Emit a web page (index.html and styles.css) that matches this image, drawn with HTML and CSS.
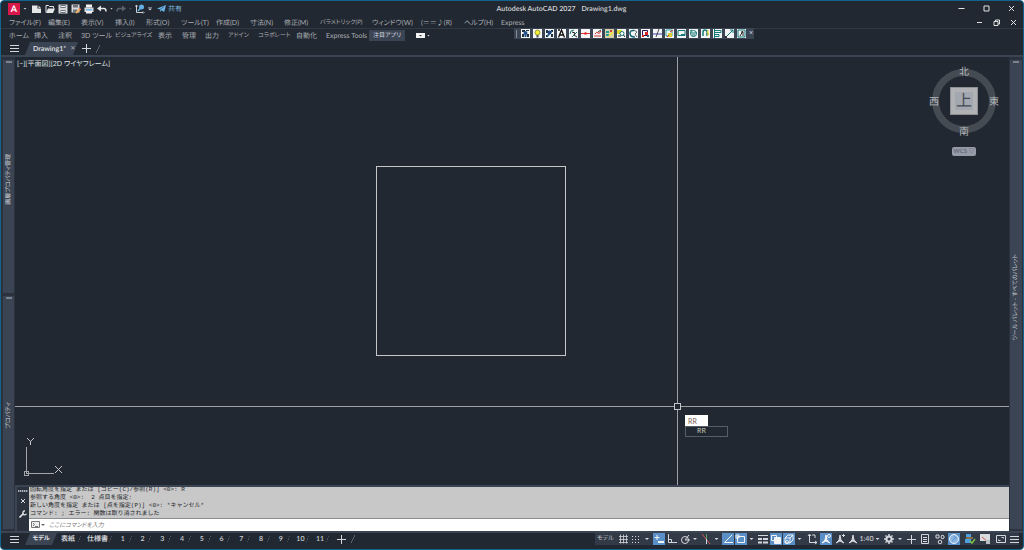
FILE: index.html
```html
<!DOCTYPE html>
<html lang="ja">
<head>
<meta charset="utf-8">
<title>Autodesk AutoCAD 2027 - Drawing1.dwg</title>
<link rel="stylesheet" href="styles.css">
</head>
<body>
<div class="window">
  <header class="titlebar">
    <div class="quick">
      <button class="app" aria-label="アプリケーション メニュー"><b>A</b></button>
      <span class="caret"></span>
      <button class="qi" aria-label="新規"><svg viewBox="0 0 10 10"><path fill="#e4e6e8" d="M0 1.500h5.500v3H9V9H0z"/><path fill="#c5c8cc" d="M6.500 1.500L9 4H6.500z"/></svg></button>
      <button class="qi" aria-label="開く"><svg viewBox="0 0 10 10"><path fill="none" stroke="#e4e6e8" d="M1 8.500v-7h2.500l1 1h4v2"/><path fill="#e4e6e8" d="M3 4.500h7L8 9H1z"/></svg></button>
      <button class="qi" aria-label="上書き保存"><svg viewBox="0 0 10 10"><path fill="#d6d8da" d="M.5.5h9v9h-9z"/><path fill="#6b727b" d="M2.500 1h5v3h-5zM2.500 6h5v3h-5z"/><path fill="#eee" d="M3 2h4v1H3zM3 7h4v1H3z"/></svg></button>
      <button class="qi" aria-label="名前を付けて保存"><svg viewBox="0 0 10 10"><path fill="#d6d8da" d="M.5.5h8v8h-8z"/><path fill="#6b727b" d="M2 1h5v2.500H2zM2 5.500h4v3H2z"/><path stroke="#e8b060" stroke-width="2" d="M5 9l4-4"/><path stroke="#e36b5c" stroke-width="2" d="M8.500 5.500l1-1"/></svg></button>
      <button class="qi" aria-label="印刷"><svg viewBox="0 0 10 10"><path fill="#f2f2f2" d="M2 .5h6v3H2z"/><path fill="#d6d8da" d="M.5 3.500h9V8h-9z"/><path fill="#72b7e8" d="M2 5h6v1.500H2z"/><path fill="#f2f2f2" d="M2 7h6v2.500H2z"/></svg></button>
      <button class="qi" aria-label="元に戻す"><svg viewBox="0 0 10 10"><path fill="none" stroke="#e4e6e8" stroke-width="1.500" d="M3 4.500h4q2 0 2 3"/><path fill="#e4e6e8" d="M0 4.500l4-3v6z"/></svg></button>
      <span class="caret small"></span>
      <button class="qi" aria-label="やり直し"><svg viewBox="0 0 10 10"><path fill="none" stroke="#59616c" stroke-width="1.500" d="M7 4.500H3q-2 0-2 3"/><path fill="#59616c" d="M10 4.500l-4-3v6z"/></svg></button>
      <span class="caret small dim"></span>
      <button class="qi" aria-label="フィールド"><svg viewBox="0 0 10 10"><path fill="none" stroke="#ccd1d6" d="M1.500 1v7.500H8M.5 2.500l1-1.500 1 1.500M8 7.500l1 1-1 1"/><circle cx="6.500" cy="3" r="2.500" fill="#65afe4"/><path stroke="#65afe4" stroke-width="1.500" d="M3 7l2.500-3"/></svg></button>
      <span class="custom caret"></span>
      <button class="share"><svg viewBox="0 0 10 10"><path fill="#6bb6ea" d="M0 5l10-4-2 8-3-2-1.500 2V6z"/><path stroke="#232932" stroke-width=".6" d="M3.500 6L8 2.700"/></svg>共有</button>
    </div>
    <h1 class="title"><span>Autodesk AutoCAD 2027</span><span>Drawing1.dwg</span></h1>
    <div class="winctl">
      <button aria-label="最小化"><svg viewBox="0 0 7 7"><path d="M.5 3.500h6"/></svg></button>
      <button aria-label="最大化"><svg viewBox="0 0 7 7"><path d="M1 1h5v5H1z"/></svg></button>
      <button aria-label="閉じる"><svg viewBox="0 0 7 7"><path d="M1 1l5 5M6 1L1 6"/></svg></button>
    </div>
  </header>

  <nav class="menubar">
    <div class="menus">
      <button>ファイル(F)</button><button>編集(E)</button><button>表示(V)</button><button>挿入(I)</button><button>形式(O)</button><button>ツール(T)</button><button>作成(D)</button><button>寸法(N)</button><button>修正(M)</button><button class="kana">パラメトリック(P)</button><button>ウィンドウ(W)</button><button>(＝＝♪(R)</button><button>ヘルプ(H)</button><button>Express</button>
    </div>
    <div class="docctl">
      <button aria-label="図面を最小化"><svg viewBox="0 0 7 7"><path d="M1 3.500h5"/></svg></button>
      <button aria-label="図面を元に戻す"><svg viewBox="0 0 7 7"><path d="M1 2.500h4v4H1zM2.500 2.500V1h4v4H5"/></svg></button>
      <button aria-label="図面を閉じる"><svg viewBox="0 0 7 7"><path d="M1 1l5 5M6 1L1 6"/></svg></button>
    </div>
  </nav>

  <nav class="ribbon">
    <button>ホーム</button><button>挿入</button><button>注釈</button><button>3D ツール</button><button class="kana">ビジュアライズ</button><button>表示</button><button>管理</button><button>出力</button><button class="kana">アドイン</button><button class="kana">コラボレート</button><button>自動化</button><button>Express Tools</button><button class="active">注目アプリ</button>
    <button class="panelbtn" aria-label="リボン表示"><svg viewBox="0 0 9 5"><path fill="#f2f2f2" d="M0 0h9v5H0z"/><path fill="#333" d="M3 2h3L4.500 3.500z"/></svg><span class="caret small"></span></button>
    <div class="express">
      <span class="grip"></span>
      <button aria-label="レイヤ"><svg viewBox="0 0 9 9"><path fill="#1f3242" d="M1 1h3v2H1zM5 1h3v1H5zM1 5h2v3H1zM6 5h2v3H6z"/><circle cx="4.500" cy="4" r="2" fill="#24508c"/><path fill="#24508c" d="M3.500 5h2v3h-2z"/></svg></button>
      <button aria-label="レイヤ表示"><svg viewBox="0 0 9 9"><circle cx="4.500" cy="3.500" r="2.500" fill="#f5ed2f" stroke="#777820" stroke-width=".7"/><path fill="#555" d="M3.500 6h2v2.500h-2z"/></svg></button>
      <button aria-label="レイヤ分離"><svg viewBox="0 0 9 9"><path fill="#1f3242" d="M1 1h2v3H1zM6 1h2v2H6zM1 6h2v2H1zM6 5h2v3H6z"/><path stroke="#28669a" stroke-width="2" d="M2.500 7l4-5"/><circle cx="4.500" cy="3.500" r="2" fill="#24447a"/></svg></button>
      <button aria-label="文字"><svg viewBox="0 0 9 9"><path fill="none" stroke="#111" stroke-width="1.300" d="M1.500 8.500L4.500 1l3 7.500M2.500 6h4M1 1h2"/></svg></button>
      <button aria-label="円弧文字"><svg viewBox="0 0 9 9"><path fill="none" stroke="#177" d="M1 5q0-4 4-4M3 8l5-5"/><path fill="none" stroke="#222" d="M3 3l3 1-1 2 3 2"/></svg></button>
      <button aria-label="線分"><svg viewBox="0 0 9 9"><path stroke="#d33" d="M0 4.500h9"/><circle cx="4.500" cy="4.500" r="1.300" fill="#d22"/></svg></button>
      <button aria-label="引出線"><svg viewBox="0 0 9 9"><path fill="none" stroke="#c33" d="M1 7h7M2 5q2-3 3-1t3-2"/><path stroke="#333" d="M5 3l3-2"/></svg></button>
      <button aria-label="ブロック"><svg viewBox="0 0 9 9"><path fill="#d8d0a8" d="M0 0h9v9H0z"/><path fill="#299" d="M1 2h3v2H1zM1 5h3v2H1z"/><path fill="#c43" d="M5 1h2v2H5z"/><path stroke="#f4e82a" stroke-width="1.500" d="M4 7l4-4"/></svg></button>
      <button aria-label="検索"><svg viewBox="0 0 9 9"><path fill="#d9d92b" d="M0 1h5v4H0z"/><circle cx="5" cy="4.500" r="2" fill="#fff" stroke="#177"/><path stroke="#222" d="M6.500 6L8 8M1 7h3"/></svg></button>
      <button aria-label="雲マーク"><svg viewBox="0 0 9 9"><path fill="none" stroke="#167" stroke-width="1.500" d="M5 1.500Q1 1 1 4.500T6 8"/><path fill="none" stroke="#344" stroke-width=".8" d="M5 1l3 2-2 2 2 3"/></svg></button>
      <button aria-label="置換"><svg viewBox="0 0 9 9"><path fill="none" stroke="#315" d="M1.500 1.500h5v5h-5z"/><path fill="#d22" d="M4 3h3v3H4zM1 6h2v2H1z"/><path fill="#258" d="M6 6h2v2H6z"/></svg></button>
      <button aria-label="トリム"><svg viewBox="0 0 9 9"><path stroke="#44a" d="M0 5h9"/><path stroke="#222" stroke-width=".8" d="M3 8l3-8"/></svg></button>
      <button aria-label="ハッチング"><svg viewBox="0 0 9 9"><path fill="none" stroke="#299" d="M1 1h6v6H1z"/><path fill="#dc3" d="M3 4h4v4H3z"/><path stroke="#c33" d="M5 3l3-2M2 8l2-2"/></svg></button>
      <button aria-label="ワイプアウト"><svg viewBox="0 0 9 9"><path fill="none" stroke="#177" d="M1 1.500h7v5H1z"/><path stroke="#177" d="M4 5.500h4"/></svg></button>
      <button aria-label="回転"><svg viewBox="0 0 9 9"><circle cx="4.500" cy="4.500" r="3" fill="none" stroke="#177"/><path stroke="#177" d="M1 4h7M3 6h3M3 1L1 2"/></svg></button>
      <button aria-label="マグネット"><svg viewBox="0 0 9 9"><path fill="none" stroke="#177" stroke-width="1.500" d="M2 7V3q0-2 2-2t2 2v4"/><path fill="none" stroke="#e5d52a" d="M7.500 1L6 4h2L6.500 7"/></svg></button>
      <button aria-label="整列"><svg viewBox="0 0 9 9"><path fill="none" stroke="#177" d="M1.500 0v9M2 1.500h6v2H2M2 5.500h4v2H2"/></svg></button>
      <button aria-label="尺度"><svg viewBox="0 0 9 9"><path fill="none" stroke="#177" d="M1 8l7-7M5 1h3v3"/><path fill="#333" d="M0 7h2v2H0z"/></svg></button>
      <button aria-label="リスト"><svg viewBox="0 0 9 9"><path fill="none" stroke="#177" d="M1 1h7v7H1z"/><path fill="none" stroke="#222" d="M3 7l3-5M4 3h2v4"/></svg></button>
      <button class="close" aria-label="ツールバーを閉じる">×</button>
    </div>
  </nav>

  <div class="filetabs">
    <button class="burger" aria-label="図面メニュー"></button>
    <button class="slant doc">Drawing1* <span>✕</span></button>
    <button class="add" aria-label="新しい図面"></button>
    <span class="slash"></span>
  </div>

  <main class="main">
    <aside class="rail">
      <section><i></i><span class="vert">画層プロパティ管理</span></section>
      <section><i></i><span class="vert">プロパティ</span></section>
    </aside>
    <div class="workspace">
      <div class="canvas">
        <svg class="drawing" shape-rendering="crispEdges" fill="none" stroke="#c4c6c9">
          <path d="M361.500 109.500h189v189h-189z"/>
          <path stroke="#9da1a6" d="M662.500 0v346M662.500 353v140M0 349.500h659M666 349.500h2000"/>
          <path d="M659.500 346.500h6v6h-6z"/>
          <path stroke="#a2a6aa" d="M11.500 390v27M12 416.500h27M9.500 414.500h4v4h-4z"/>
          <path shape-rendering="auto" d="M12 381l3.500 3.500L19 381M15.500 384v4M40 409l7 7M47 409l-7 7"/>
        </svg>
        <div class="viewlabel">[−][平面図][2D ワイヤフレーム]</div>
        <div class="viewcube">
          <svg viewBox="0 0 74 80"><circle cx="37" cy="40" r="28.500" fill="none" stroke="#444b53" stroke-width="7"/></svg>
          <span class="n">北</span><span class="w">西</span><button class="top">上</button><span class="e">東</span><span class="s">南</span>
        </div>
        <button class="wcs">WCS <span>▽</span></button>
        <div class="dynamic">
          <input type="text" value="RR" aria-label="コマンド入力">
          <div class="suggest">RR</div>
        </div>
      </div>
      <section class="command">
        <div class="cmdtools">
          <i></i>
          <button aria-label="閉じる"><svg viewBox="0 0 8 8"><path d="M2 2l4 4M6 2L2 6"/></svg></button>
          <button aria-label="カスタマイズ"><svg viewBox="0 0 8 8"><path stroke-width="1.600" d="M.5 7.500L4.500 3.500"/><path stroke-width="1.400" d="M6 .7Q3.500 1 4 3.500t3.500.5"/></svg></button>
        </div>
        <div class="cmdbody">
          <div class="history">
            <p>回転角度を指定 または [コピー(C)/参照(R)] &lt;0&gt;: R</p>
            <p>参照する角度 &lt;0&gt;:&nbsp; 2 点目を指定:</p>
            <p>新しい角度を指定 または [点を指定(P)] &lt;0&gt;: *キャンセル*</p>
            <p>コマンド: ; エラー: 関数は取り消されました</p>
          </div>
          <label class="prompt">
            <svg viewBox="0 0 14 8"><path fill="#eee" stroke="#777" d="M.5.5h8v6h-8z"/><path fill="none" stroke="#555" stroke-width=".8" d="M2 2l1.500 1.500L2 5M4 5.500h3"/><path fill="#666" d="M10 3h4l-2 2z"/></svg>
            <input type="text" placeholder="ここにコマンドを入力" aria-label="コマンド">
          </label>
        </div>
      </section>
    </div>
    <aside class="rail right">
      <section><i></i><span class="vert">ツール パレット - すべてのパレット</span></section>
    </aside>
  </main>

  <footer class="statusbar">
    <nav class="layouts">
      <button class="burger" aria-label="レイアウト メニュー"></button>
      <button class="slant model">モデル</button>
      <button class="lt">表紙</button><button class="lt wide">仕様書</button>
      <div class="sheets">
        <button class="lt">1</button><button class="lt">2</button><button class="lt">3</button><button class="lt">4</button><button class="lt">5</button><button class="lt">6</button><button class="lt">7</button><button class="lt">8</button><button class="lt">9</button><button class="lt">10</button><button class="lt">11</button>
      </div>
      <button class="add" aria-label="新しいレイアウト"></button>
      <span class="slash"></span>
    </nav>
    <div class="status">
      <button>モデル</button>
      <button aria-label="グリッド"><svg viewBox="0 0 12 12"><path d="M3.500 1.500v9M6.500 1.500v9M9.500 1.500v9M2 3.500h9M2 6.500h9M2 9.500h9" stroke-width=".8"/></svg></button>
      <button aria-label="スナップ"><svg viewBox="0 0 12 12"><path stroke-dasharray="1 2" d="M2 3.500h8M2 6.500h8M2 9.500h8"/></svg></button>
      <button class="dd" aria-label="スナップ設定"></button>
      <button class="on" aria-label="ダイナミック入力"><svg viewBox="0 0 12 12"><path d="M4 2v5M1.500 4.500h5"/><path stroke-width="2" d="M5 9h6"/></svg></button>
      <button aria-label="直交モード"><svg viewBox="0 0 12 12"><path d="M2.500 1v8.500H11M2.500 6.500h3v3"/></svg></button>
      <button aria-label="極トラッキング"><svg viewBox="0 0 12 12"><circle cx="6" cy="7" r="3.500"/><path d="M6 7h5M6 7l4-5"/></svg></button>
      <button class="dd" aria-label="極設定"></button>
      <button aria-label="アイソメ作図"><svg viewBox="0 0 12 12"><path stroke="#d25858" d="M2 1l8 10"/><path stroke="#58a060" d="M6.500 1v5"/><path d="M6.500 6v5"/></svg></button>
      <button class="dd" aria-label="アイソメ設定"></button>
      <button class="on" aria-label="オブジェクト スナップ トラッキング"><svg viewBox="0 0 12 12"><path d="M10 2L2.500 9.500H11"/></svg></button>
      <button class="on" aria-label="オブジェクト スナップ"><svg viewBox="0 0 12 12"><path d="M2.500 3.500h7v6h-7zM1 2h3v3H1z"/></svg></button>
      <button class="dd" aria-label="スナップ点"></button>
      <button aria-label="線の太さ"><svg viewBox="0 0 12 12"><path d="M1 2.500h10"/><path stroke-width="2" d="M1 6h4M6 6h5M1 9.500h4M6 9.500h5"/></svg></button>
      <button class="on" aria-label="透過性"><svg viewBox="0 0 12 12"><path d="M1.500 2.500h5v5h-5z"/><path fill="#f1f3f5" d="M4.500 4.500h6v6h-6z"/></svg></button>
      <button class="on" aria-label="3D オブジェクト スナップ"><svg viewBox="0 0 12 12"><path d="M2 5h5v5H2zM2 5l3-3h5v5l-3 3M7 5l3-3"/><circle cx="4" cy="9" r="1.500"/></svg></button>
      <button class="dd" aria-label="3D スナップ設定"></button>
      <button aria-label="ダイナミック UCS"><svg viewBox="0 0 12 12"><path d="M3.500 2v7.500H11M2 3l1.500-2L5 3M9 8l2 1.500L9 11M6 2h3v3"/></svg></button>
      <button class="on" aria-label="注釈表示"><svg viewBox="0 0 12 12"><path fill="#f1f3f5" d="M6 2l1 5 3 3-4-2-4 2 3-3z"/><circle cx="9" cy="3" r="1.500"/></svg></button>
      <button aria-label="自動尺度"><svg viewBox="0 0 12 12"><path fill="#d4d7db" d="M6 2l1 5 3 3-4-2-4 2 3-3z"/><path d="M8 2.500h3M9.500 1v3"/></svg></button>
      <button aria-label="注釈尺度"><svg viewBox="0 0 12 12"><path fill="#d4d7db" d="M6 2l1 5 3 3-4-2-4 2 3-3z"/></svg></button>
      <button class="scale">1:40</button>
      <button class="dd" aria-label="尺度リスト"></button>
      <button aria-label="ワークスペース"><svg viewBox="0 0 12 12"><circle cx="6" cy="6" r="2.500" stroke-width="2"/><path stroke-width="1.500" d="M6 1v2M6 9v2M1 6h2M9 6h2M2.500 2.500l1 1M8.500 8.500l1 1M9.500 2.500l-1 1M3.500 8.500l-1 1"/></svg></button>
      <button class="dd" aria-label="ワークスペース一覧"></button>
      <button aria-label="注釈モニター"><svg viewBox="0 0 12 12"><path d="M6.500 2v9M2 6.500h9"/></svg></button>
      <button aria-label="クイック プロパティ"><svg viewBox="0 0 12 12"><path d="M2.500 1.500h7v9h-7zM4 4.500h4M4 6.500h4M4 8.500h4"/></svg></button>
      <button aria-label="オブジェクト選択"><svg viewBox="0 0 12 12"><path d="M2 2h3v3H2zM8 2l2 1v2L8 6 7 4z"/><circle cx="6" cy="9" r="1.800"/></svg></button>
      <button class="on" aria-label="ハードウェア アクセラレーション"><svg viewBox="0 0 12 12"><circle cx="6" cy="6" r="4.500" fill="#8cb6e2"/><path stroke="#5b8fc8" d="M4 8l4-4M6 3.500l2.500 2"/></svg></button>
      <button aria-label="画層通知"><svg viewBox="0 0 12 12"><path stroke="none" fill="#4da0e0" d="M2 1h5v3H2zM1 6h6v4H1z"/><path stroke="#e2a04a" d="M2 5h7"/><path stroke="#77c043" stroke-width="1.500" d="M6 8l2 2 3-4"/></svg></button>
      <button aria-label="グラフィックス"><svg viewBox="0 0 12 12"><path stroke="none" fill="#d9dcdf" d="M1 1h10v7H1z"/><path stroke="#d05b4c" d="M3 4l6 5"/><path stroke="none" fill="#b9bdc4" d="M7 7h4v4H7z"/></svg></button>
      <button aria-label="フルスクリーン"><svg viewBox="0 0 12 12"><path d="M1.500 2.500h9v7h-9zM6.500 4.500h2v1M3.500 6.500v1h2"/></svg></button>
      <button class="burger" aria-label="カスタマイズ"></button>
    </div>
  </footer>
</div>
</body>
</html>
```
FILE: styles.css
```css
:root {
  --bg: #222831;
  --panel: #3b4453;
  --dark: #2b323e;
  --text: #c9ccd0;
  --blue: #5b8fc8;
  --ui: Lato, "Noto Sans CJK JP", sans-serif;
}
* { box-sizing: border-box; }
html, body { height: 100%; margin: 0; }
body {
  background: #fff;
  color: var(--text);
  font: 7px/10px var(--ui);
  font-feature-settings: "palt";
  text-rendering: geometricPrecision;
}
button {
  margin: 0; padding: 0; border: 0; background: none;
  color: inherit; font: inherit; font-feature-settings: inherit; text-rendering: inherit;
  white-space: nowrap; text-align: left;
}
svg { display: block; }
.kana { font-size: 6px; }

.window {
  display: flex; flex-direction: column;
  height: 100vh;
  border: 1px solid #12648c;
  border-radius: 4px;
  background: var(--bg);
  overflow: hidden;
}
.caret {
  width: 4px; height: 2px;
  background: #c9ccd0;
  clip-path: polygon(0 0, 100% 0, 50% 100%);
}
.caret.small { width: 3px; }
.caret.dim { background: #59616c; }

/* Title bar */
.titlebar { display: grid; grid-template-columns: 5fr auto 4fr; align-items: center; height: 15px; flex: none; }
.quick { display: flex; align-items: center; gap: 3px; padding-left: 7px; }
.app {
  width: 12px; height: 12px;
  background: #d9174b; color: #fff;
  font-size: 9px; line-height: 12px; text-align: center;
}
.qi { width: 10px; }
.qi svg { width: 10px; height: 10px; }
.app + .caret { margin-right: 2px; }
.custom { height: 4px; clip-path: polygon(0 0, 100% 0, 100% 25%, 0 25%, 0 50%, 100% 50%, 50% 100%, 0 50%); }
.share { display: flex; align-items: center; gap: 2px; margin-left: 2px; color: #7fb6da; }
.share svg { width: 9px; height: 9px; }
.title { display: flex; gap: 6px; margin: 0; font-size: 7px; font-weight: 600; color: #d4d6d9; white-space: nowrap; }
.winctl, .docctl { display: flex; justify-content: flex-end; padding-right: 8px; gap: 18px; }
.docctl { gap: 10px; padding-right: 6px; }
.winctl svg, .docctl svg { width: 7px; height: 7px; fill: none; stroke: #e0e2e4; stroke-width: 1; }

/* Menus */
.menubar { display: flex; align-items: center; justify-content: space-between; height: 13px; flex: none; border-bottom: 1px solid #303844; color: #a9adb3; }
.menus {
  display: grid; align-items: center; padding: 1px 0 0 8px;
  grid-template-columns: 39px 33px 34px 31px 35px 35px 34px 34px 36px 52px 49px 43px 37px auto;
}
.ribbon {
  position: relative;
  display: grid; align-items: center; flex: none;
  grid-template-columns: 25px 24px 23px 34px 43px 24px 23px 23px 30px 38px 30px 43px 36px auto;
  height: 13px; padding-left: 8px; color: #a9adb3;
}
.ribbon .active { height: 11px; background: var(--panel); color: #dcdfe2; text-align: center; font-size: 6px; }
.panelbtn { display: flex; align-items: center; gap: 2px; padding-left: 11px; }
.panelbtn svg { width: 9px; height: 5px; }
.express {
  position: absolute; top: -1px; left: 50.2%;
  display: flex; align-items: center; gap: 3px;
  height: 11px; padding: 0 1px 0 2px;
  background: var(--panel);
}
.express button { width: 9px; height: 9px; background: #f4f6f6; }
.express button svg { width: 9px; height: 9px; }
.grip { width: 1px; height: 8px; margin-right: 1px; background: #858c97; }
.express .close { width: 4px; background: none; line-height: 5px; color: #dde; }

/* File tabs */
.filetabs { display: flex; align-items: center; height: 15px; flex: none; padding-left: 9px; border-bottom: 2px solid var(--panel); }
.burger {
  width: 9px; height: 7px;
  background: linear-gradient(#d4d7da 1px, transparent 1px 3px, #d4d7da 3px 4px, transparent 4px 6px, #d4d7da 6px);
}
.slant { background: var(--panel); color: #e4e6e8; clip-path: polygon(5px 0, 100% 0, calc(100% - 5px) 100%, 0 100%); align-self: stretch; font-weight: 600; }
.doc { display: flex; align-items: center; gap: 4px; width: 53px; margin-left: 6px; padding: 0 0 0 8px; }
.doc span { font-weight: 400; font-size: 6px; color: #a9adb3; }
.add {
  width: 9px; height: 9px; margin-left: 4px;
  background: linear-gradient(#d4d7da, #d4d7da) 50% 50% / 9px 1px no-repeat, linear-gradient(#d4d7da, #d4d7da) 50% 50% / 1px 9px no-repeat;
}
.slash { width: 4px; height: 8px; margin-left: 5px; background: linear-gradient(to bottom right, transparent 42%, #59616c 42% 58%, transparent 58%); }

/* Work area */
.main { display: flex; flex: 1; min-height: 0; }
.rail { display: flex; flex-direction: column; gap: 3px; width: 14px; flex: none; padding: 3px 1px 2px 2px; background: var(--dark); }
.rail.right { padding: 3px 1px 2px 1px; }
.rail section { display: grid; grid-template-rows: 5px 1fr; flex: 1; justify-items: center; background: var(--panel); min-height: 0; }
.rail i { width: 6px; height: 2px; margin-top: 1px; background: #7a828e; }
.vert { writing-mode: vertical-rl; transform: rotate(180deg); align-self: center; white-space: nowrap; text-orientation: sideways; font-size: 6px; line-height: 10px; }
.workspace { display: flex; flex-direction: column; flex: 1; min-width: 0; }
.canvas { position: relative; flex: 1; min-height: 0; overflow: hidden; }
.drawing { position: absolute; inset: 0; width: 100%; height: 100%; }
.viewlabel { padding: 2px; font-size: 7px; color: #dfe1e3; }
.viewcube { position: absolute; right: 8px; top: 4px; width: 74px; height: 80px; font-size: 10px; line-height: 12px; color: #b4b7ba; }
.viewcube svg { position: absolute; inset: 0; }
.viewcube span, .top { position: absolute; }
.n { left: 32px; top: 5px; }
.s { left: 32px; bottom: 3px; }
.w { left: 2px; top: 35px; }
.e { right: 2px; top: 35px; }
.top {
  left: 23px; top: 26px; width: 28px; height: 28px;
  border: 1px solid #8d9195;
  background: #a3a7af; box-shadow: inset 0 0 0 4px #b0b2b5;
  color: #454b54; font-size: 16px; line-height: 24px; text-align: center;
}
.wcs {
  position: absolute; right: 33px; top: 90px;
  width: 24px; height: 9px; border-radius: 2px;
  background: #969ba8; color: #596070; font-size: 6px; line-height: 9px; text-align: center;
}
.dynamic { position: absolute; left: 670px; top: 358px; }
.dynamic input { display: block; width: 23px; height: 11px; padding: 0 2px; border: 1px solid #fff; background: #fff; color: #775f50; font: 7px/9px var(--ui); }
.suggest { width: 43px; height: 11px; padding-left: 11px; border: 1px solid #555d68; color: #c8c8bd; line-height: 9px; }

/* Command line */
.command { display: flex; flex: none; height: 46px; padding: 2px 0 0 2px; background: var(--panel); }
.cmdtools { display: flex; flex-direction: column; align-items: center; gap: 5px; width: 12px; flex: none; padding-top: 3px; background: var(--dark); }
.cmdtools i { width: 10px; height: 2px; background: repeating-linear-gradient(90deg, #aeb3ba 0 1px, #596270 1px 2px); }
.cmdtools svg { width: 8px; height: 8px; fill: none; stroke: #dfe1e3; }
.cmdbody { flex: 1; display: flex; flex-direction: column; min-width: 0; background: #fff; }
.history {
  display: flex; flex-direction: column; justify-content: flex-end; flex: 1; min-height: 0;
  padding: 0 1px; overflow: hidden;
  background: #c8c8c8; color: #24262a; border-bottom: 1px solid #8b8d90;
  font: 6px/8px "Liberation Mono", "Noto Sans CJK JP", monospace;
  font-feature-settings: normal;
}
.history p { flex: none; margin: 0; white-space: pre; }
.prompt { display: flex; align-items: center; gap: 4px; height: 12px; padding-left: 2px; }
.prompt svg { width: 14px; height: 8px; }
.prompt input { flex: 1; min-width: 0; height: 10px; padding: 0; border: 0; background: none; font: italic 6px/10px var(--ui); font-feature-settings: "palt"; }
.prompt input::placeholder { color: #777; opacity: 1; }

/* Status bar */
.statusbar { display: flex; justify-content: space-between; height: 18px; flex: none; padding: 0 4px 4px 9px; border-top: 2px solid var(--panel); font-weight: 600; }
.layouts { display: flex; align-items: center; }
.layouts .model { display: flex; align-items: center; justify-content: center; margin-left: 6px; width: 32px; font-size: 6px; }
.lt { display: flex; align-items: center; width: 25px; height: 12px; padding-left: 4px; background: linear-gradient(110deg, transparent 47%, #49515d 47% 53%, transparent 53%) 100% 50% / 5px 10px no-repeat; }
.lt.wide { width: 31px; padding-left: 5px; }
.sheets { display: grid; grid-template-columns: repeat(11, 1fr); width: 217px; }
.sheets .lt { width: auto; justify-content: center; padding: 0; }
.layouts .add { margin-left: 7px; }
.status {
  display: grid; align-items: center; justify-items: center; background: #323a47; font-weight: 400;
  grid-template-columns: 21px 13px 13px 10px 13px 13px 13px 8px 13px 9px 13px 13px 9px 13px 13px 13px 9px 15px 14px 13px 13px 15px 7px 15px 8px 14px 14px 15px 14px 17px 13px 19px 9px;
}
.status > button { font-size: 6px; }
.status > .scale { font-size: 7px; font-weight: 600; }
.status svg { width: 12px; height: 12px; fill: none; stroke: #d4d7db; stroke-width: 1; }
.status .on { background: var(--blue); }
.status .on svg { stroke: #f1f3f5; }
.status .dd { width: 4px; height: 2px; background: #d4d7db; clip-path: polygon(0 0, 100% 0, 50% 100%); }
```
